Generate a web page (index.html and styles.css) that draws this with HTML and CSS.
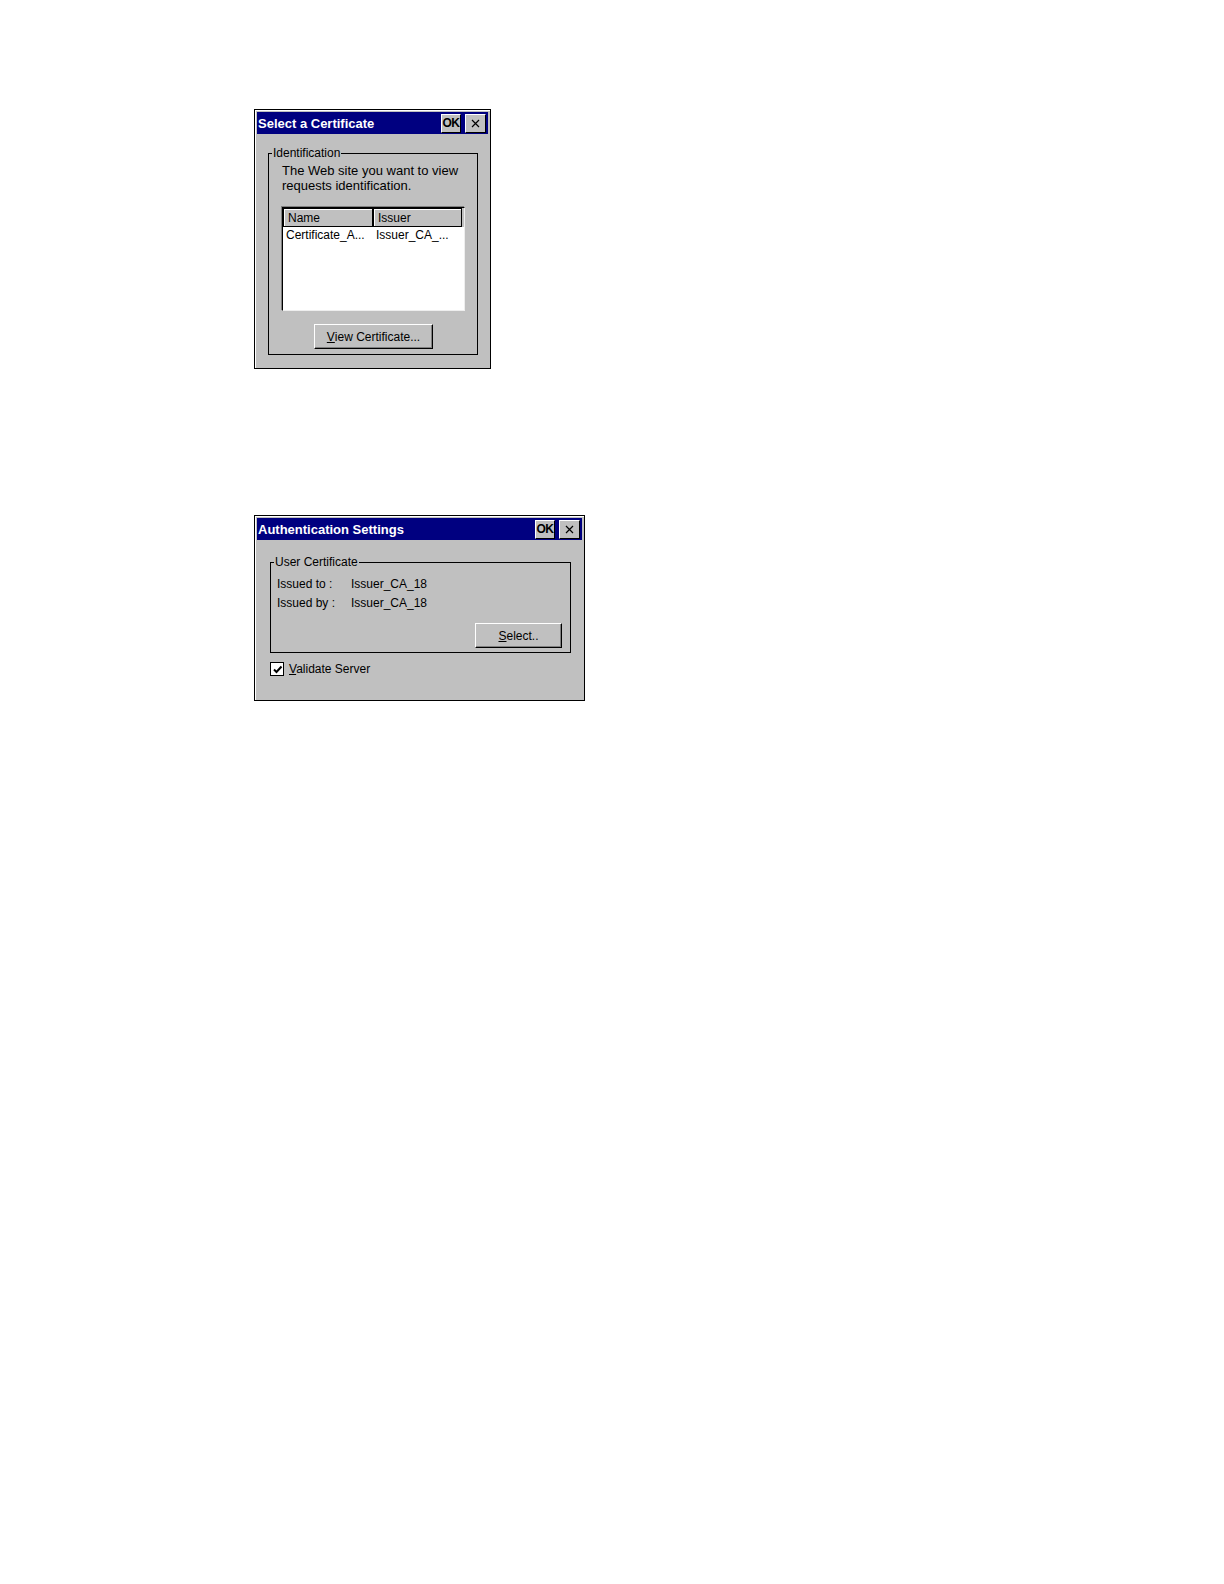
FILE: index.html
```html
<!DOCTYPE html>
<html>
<head>
<meta charset="utf-8">
<link rel="stylesheet" href="styles.css">
</head>
<body>
<div class="page">
  <div class="dlg dlg1">
    <div class="titlebar">
      <span class="title">Select a Certificate</span>
      <span class="tb-btn ok">OK</span>
      <span class="tb-btn close"><svg width="9" height="9" viewBox="0 0 9 9"><path d="M1 1L8 8M8 1L1 8" stroke="#000" stroke-width="1.2" fill="none"/></svg></span>
    </div>
    <div class="body body1">
      <fieldset class="group g1">
        <legend>Identification</legend>
        <p class="msg">The Web site you want to view<br>requests identification.</p>
        <div class="list">
          <div class="lhead"><div class="hc c1">Name</div><div class="hc c2">Issuer</div></div>
          <div class="lrow"><div class="rc c1">Certificate_A...</div><div class="rc c2">Issuer_CA_...</div></div>
        </div>
        <div class="btnrow center"><span class="btn btn-view"><u>V</u>iew Certificate...</span></div>
      </fieldset>
    </div>
  </div>

  <div class="dlg dlg2">
    <div class="titlebar">
      <span class="title">Authentication Settings</span>
      <span class="tb-btn ok">OK</span>
      <span class="tb-btn close"><svg width="9" height="9" viewBox="0 0 9 9"><path d="M1 1L8 8M8 1L1 8" stroke="#000" stroke-width="1.2" fill="none"/></svg></span>
    </div>
    <div class="body body2">
      <fieldset class="group g2">
        <legend>User Certificate</legend>
        <div class="kv"><span class="k">Issued to :</span><span class="v">Issuer_CA_18</span></div>
        <div class="kv"><span class="k">Issued by :</span><span class="v">Issuer_CA_18</span></div>
        <div class="btnrow right"><span class="btn btn-select"><u>S</u>elect..</span></div>
      </fieldset>
      <div class="check">
        <span class="cbox"><svg width="11" height="11" viewBox="0 0 11 11"><path d="M2 5.5L4.5 8L9.5 2.5" stroke="#000" stroke-width="2" fill="none"/></svg></span>
        <span class="clabel"><u>V</u>alidate Server</span>
      </div>
    </div>
  </div>
</div>
</body>
</html>
```

FILE: styles.css
```css
html, body {
  margin: 0;
  padding: 0;
  background: #fff;
}
body {
  font-family: "Liberation Sans", Arial, sans-serif;
  font-size: 12px;
  color: #000;
}
.page {
  padding: 109px 0 0 254px;
  display: flex;
  flex-direction: column;
  align-items: flex-start;
  gap: 146px;
}
.dlg {
  box-sizing: border-box;
  background: #c0c0c0;
  border: 1px solid #000;
  padding: 2px;
  box-shadow: inset 1px 1px 0 #fff;
  display: flex;
  flex-direction: column;
}
.dlg1 { width: 237px; height: 260px; }
.dlg2 { width: 331px; height: 186px; }

.titlebar {
  height: 22px;
  background: #000080;
  display: flex;
  align-items: center;
  padding: 0 2px 0 1px;
  gap: 4px;
}
.title {
  flex: 1;
  color: #fff;
  font-weight: bold;
  font-size: 13px;
  white-space: nowrap;
}
.tb-btn {
  box-sizing: border-box;
  height: 19px;
  background: #c0c0c0;
  border: 1px solid;
  border-color: #fff #000 #000 #fff;
  display: flex;
  align-items: center;
  justify-content: center;
}
.tb-btn.ok {
  width: 20px;
  font-weight: bold;
  font-size: 12px;
  letter-spacing: -0.5px;
}
.tb-btn.close { width: 21px; }

.body { flex: 1; }
.body1 { padding: 12px 10px 0 11px; }
.body2 { padding: 15px 11px 0 13px; }

.group {
  margin: 0;
  border: 1px solid #000;
  min-width: 0;
}
.group legend {
  padding: 0 1px;
  line-height: 14px;
}
.g1 {
  height: 209px;
  box-sizing: border-box;
  padding: 3px 12px 0 13px;
}
.g1 legend { margin-left: -10px; }
.msg {
  margin: 0;
  font-size: 13px;
  line-height: 15px;
}
.list {
  margin-top: 14px;
  height: 104px;
  box-sizing: border-box;
  background: #fff;
  border: 1px solid;
  border-color: #000 #eee #eee #000;
  box-shadow: -1px -1px 0 #808080;
}
.lhead {
  display: flex;
  height: 19px;
  background: #c0c0c0;
  padding-right: 2px;
}
.hc {
  box-sizing: border-box;
  border: 1px solid #000;
  box-shadow: inset 1px 1px 0 #fff;
  padding: 2px 4px 0;
  line-height: 14px;
}
.hc.c1 { width: 90px; }
.hc.c2 { width: 90px; margin-left: -1px; border-left-width: 2px; }
.lrow { display: flex; line-height: 14px; padding-top: 1px; }
.rc.c1 { width: 90px; padding-left: 3px; box-sizing: border-box; }
.rc.c2 { padding-left: 3px; }

.btnrow { display: flex; }
.btnrow.center { justify-content: center; margin-top: 13px; }
.btnrow.right { justify-content: flex-end; margin-top: 10px; }
.btn {
  box-sizing: border-box;
  height: 25px;
  display: flex;
  align-items: center;
  justify-content: center;
  background: #c0c0c0;
  border: 1px solid;
  border-color: #fff #000 #000 #fff;
  box-shadow: inset -1px -1px 0 #808080;
}
.btn-view { width: 119px; }
.btn-select { width: 87px; }

.g2 {
  height: 98px;
  box-sizing: border-box;
  padding: 6px 8px 0 6px;
}
.g2 legend { margin-left: -3px; }
.kv {
  display: flex;
  line-height: 19px;
}
.kv .k { width: 74px; }

.check {
  display: flex;
  align-items: center;
  margin-top: 9px;
  gap: 5px;
}
.cbox {
  box-sizing: border-box;
  width: 14px;
  height: 14px;
  background: #fff;
  border: 1px solid #000;
  display: flex;
  align-items: center;
  justify-content: center;
}
```
